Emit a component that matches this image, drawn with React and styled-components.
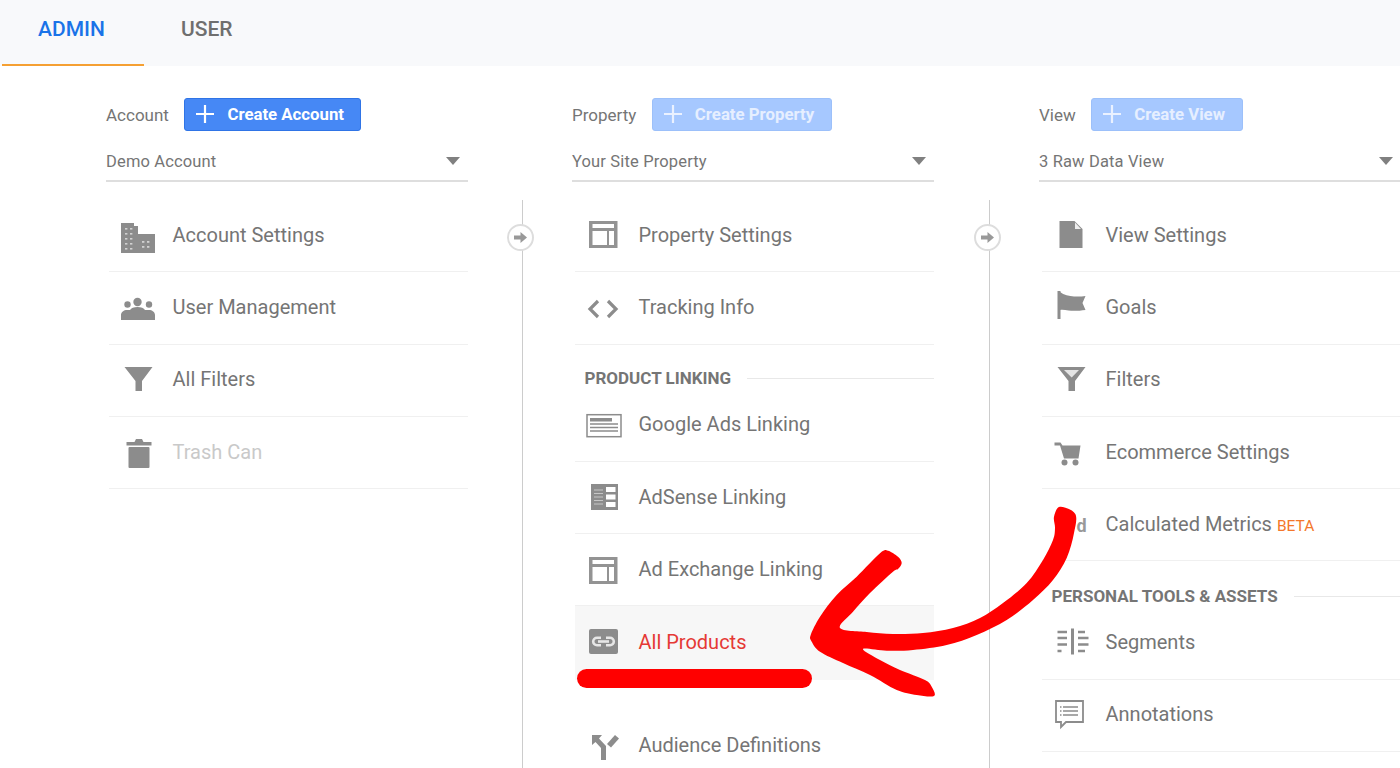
import styled, { createGlobalStyle } from "styled-components";

const GRAY = "#8c8c8c";

const GlobalStyle = createGlobalStyle`
  html, body {
    margin: 0;
    padding: 0;
    background: #fff;
    font-family: Roboto, "Liberation Sans", sans-serif;
    overflow: hidden;
  }
`;

const Page = styled.div`
  position: relative;
  width: 1400px;
  height: 768px;
  overflow: hidden;
  background: #fff;
`;

const TopBar = styled.div`
  height: 66px;
  background: #f8f9fb;
  padding-left: 2px;
  display: flex;
  box-sizing: border-box;
`;

const Tab = styled.div`
  box-sizing: border-box;
  height: 66px;
  width: ${(p) => p.$width}px;
  padding-left: ${(p) => p.$pad}px;
  display: flex;
  align-items: center;
  padding-bottom: 7px;
  font-size: 21px;
  font-weight: 500;
  color: ${(p) => (p.$active ? "#1a73e8" : "#6f6f6f")};
  border-bottom: 2px solid ${(p) => (p.$active ? "#f5a033" : "transparent")};
`;

const Columns = styled.div`
  display: flex;
  padding-left: 106px;
  height: 702px;
`;

const Column = styled.div`
  flex: 0 0 362px;
  width: 362px;
`;

const Head = styled.div`
  box-sizing: border-box;
  height: 134px;
  padding-top: 32px;
`;

const HeadRow = styled.div`
  display: flex;
  align-items: center;
  gap: 15.5px;
  height: 33px;
`;

const Label = styled.span`
  font-size: 17px;
  color: #757575;
`;

const CreateButton = styled.div`
  box-sizing: border-box;
  height: 33px;
  width: ${(p) => p.$width}px;
  display: flex;
  align-items: center;
  gap: 12px;
  padding: 0 0 1px 10px;
  border-radius: 3px;
  font-size: 16.8px;
  font-weight: 700;
  color: ${(p) => (p.$disabled ? "#e6efff" : "#fff")};
  background: ${(p) => (p.$disabled ? "#a6c8ff" : "#4688f5")};
  border: 1px solid ${(p) => (p.$disabled ? "#9cc0fa" : "#2f74e6")};
`;

const Select = styled.div`
  box-sizing: border-box;
  margin-top: 13px;
  height: 38px;
  padding: 0 8px 2px 0;
  display: flex;
  align-items: center;
  justify-content: space-between;
  font-size: 16.5px;
  letter-spacing: 0.15px;
  color: #757575;
  border-bottom: 2px solid #dedede;
`;

const Caret = styled.span`
  width: 0;
  height: 0;
  border-left: 7px solid transparent;
  border-right: 7px solid transparent;
  border-top: 8px solid #808080;
`;

const List = styled.div`
  padding-left: 2.5px;
`;

const Item = styled.div`
  box-sizing: border-box;
  height: ${(p) => p.$h || 72.3}px;
  margin-top: ${(p) => p.$top || 0}px;
  padding-left: 12px;
  display: flex;
  align-items: center;
  gap: 16px;
  font-size: 20px;
  color: ${(p) => (p.$muted ? "#c9c9c9" : p.$active ? "#e53935" : "#757575")};
  background: ${(p) => (p.$active ? "#f7f7f7" : "transparent")};
  border-bottom: 1px solid ${(p) => (p.$active || p.$plain ? "transparent" : "#f0f0f0")};
`;

const ItemText = styled.span`
  position: relative;
  top: -1px;
`;

const Beta = styled.span`
  margin-left: 5px;
  font-size: 15.5px;
  color: #f4772a;
`;

const IconSvg = styled.svg`
  flex: 0 0 36px;
  width: 36px;
  height: 36px;
  overflow: visible;
`;

const Section = styled.div`
  box-sizing: border-box;
  height: ${(p) => p.$h}px;
  padding: ${(p) => p.$pad}px 0 0 10px;
  display: flex;
  align-items: center;
  gap: 16px;
`;

const SectionTitle = styled.span`
  font-size: 17px;
  font-weight: 700;
  color: #757575;
  white-space: nowrap;
`;

const SectionRule = styled.span`
  flex: 1;
  height: 1px;
  background: #e8e8e8;
`;

const Connector = styled.div`
  flex: 0 0 ${(p) => p.$width}px;
  box-sizing: border-box;
  padding: 134px 0 0 ${(p) => p.$pad}px;
`;

const Line = styled.div`
  position: relative;
  width: 1.5px;
  height: 100%;
  background: #cccccc;
`;

const Knob = styled.div`
  position: absolute;
  top: 24px;
  left: -14.5px;
  box-sizing: border-box;
  width: 27px;
  height: 27px;
  border-radius: 50%;
  background: #fff;
  border: 2px solid #dddddd;
  display: flex;
  align-items: center;
  justify-content: center;
`;

const Overlay = styled.svg`
  position: absolute;
  left: 0;
  top: 0;
  width: 1400px;
  height: 768px;
  pointer-events: none;
`;

// outline of the hand drawn arrow, smoothed below
const arrowPoints = [
  [1060, 506.7], [1075.3, 514], [1074, 533], [1066.7, 558], [1053, 580], [1033, 600],
  [1006.7, 620], [976.7, 635], [946.7, 645], [913, 650], [886.7, 650.7], [863, 649],
  [880, 660], [900, 670], [925, 680], [931.7, 686.7], [934, 696], [916.7, 695],
  [896.7, 690], [870, 675], [843, 663], [820, 651.7], [811.7, 641.7], [810.7, 635],
  [820, 616.7], [836.7, 595], [856.7, 576.7], [880, 553.3], [888, 550.7], [898, 556.7],
  [901.7, 563], [898, 569], [893, 571.7], [870, 593], [853, 611.7], [840, 628],
  [866.7, 632], [893, 634], [923, 633], [953, 628], [980, 618], [1003, 603],
  [1026.7, 583], [1043, 560], [1053, 540], [1055, 528], [1054, 516.7],
];

const smoothPath = (pts) => {
  const n = pts.length;
  let d = `M${pts[0][0]} ${pts[0][1]}`;
  for (let i = 0; i < n; i++) {
    const p0 = pts[(i - 1 + n) % n];
    const p1 = pts[i];
    const p2 = pts[(i + 1) % n];
    const p3 = pts[(i + 2) % n];
    const c1x = (p1[0] + (p2[0] - p0[0]) / 6).toFixed(1);
    const c1y = (p1[1] + (p2[1] - p0[1]) / 6).toFixed(1);
    const c2x = (p2[0] - (p3[0] - p1[0]) / 6).toFixed(1);
    const c2y = (p2[1] - (p3[1] - p1[1]) / 6).toFixed(1);
    d += `C${c1x} ${c1y} ${c2x} ${c2y} ${p2[0]} ${p2[1]}`;
  }
  return d + "Z";
};

const Icon = ({ children }) => (
  <IconSvg viewBox="0 0 36 36" fill={GRAY}>
    {children}
  </IconSvg>
);

const Plus = ({ color }) => (
  <svg width="20" height="20" viewBox="0 0 20 20" style={{ flex: "0 0 20px" }}>
    <path d="M10 1v18M1 10h18" stroke={color} strokeWidth="2.2" fill="none" />
  </svg>
);

const BuildingIcon = () => (
  <Icon>
    <path d="M0 5h13v3h4v8h17v19H0z" />
    <g fill="#fff" opacity="0.6">
      {[4, 9].map((x) =>
        [10, 15, 20, 25, 30].map((y) => <rect key={x + "-" + y} x={x} y={y} width="2.4" height="1.6" />)
      )}
      {[21, 26].map((x) =>
        [23, 28].map((y) => <rect key={x + "-" + y} x={x} y={y} width="2.4" height="1.8" />)
      )}
    </g>
  </Icon>
);

const UsersIcon = () => (
  <Icon>
    <circle cx="16.5" cy="12" r="4.2" />
    <circle cx="6.5" cy="14.5" r="3.2" />
    <circle cx="28" cy="14.5" r="3.2" />
    <path d="M0 30v-5c0-3 3-5 6-5h3c1-2 4-3 7.500-3s6.500 1 7.500 3h4c3 0 6 2 6 5v5z" />
  </Icon>
);

const FunnelIcon = ({ hollow }) => (
  <Icon>
    <path d="M3.500 5h28L21 19v10h-6.500V19z" />
    {hollow && <path d="M10 8h15l-7.300 7.500z" fill="#e4e4e4" />}
  </Icon>
);

const TrashIcon = () => (
  <Icon>
    <path d="M5.500 7h8l1.500-3h6l1.500 3h8v3.500h-25z" />
    <rect x="7.500" y="12" width="21" height="21" rx="1" />
  </Icon>
);

const LayoutIcon = ({ y = 3 }) => (
  <Icon>
    <rect x="2" y={y} width="28.500" height="27" fill="#939393" />
    <g fill="#fff">
      <rect x="5.500" y={y + 3} width="21.500" height="4" />
      <rect x="5.500" y={y + 10} width="14.500" height="14" />
      <rect x="22" y={y + 10} width="5" height="14" />
    </g>
  </Icon>
);

const CodeIcon = () => (
  <Icon>
    <path d="M11 11l-8 8 8 8M21 11l8 8-8 8" fill="none" stroke={GRAY} strokeWidth="3.200" />
  </Icon>
);

const AdsIcon = () => (
  <Icon>
    <rect x="0" y="7.700" width="34" height="22" fill="#fff" stroke={GRAY} strokeWidth="1.500" />
    <rect x="3" y="11" width="22" height="3.500" />
    <path d="M3 17h28M3 20.500h28M3 24h28" stroke={GRAY} strokeWidth="1.300" fill="none" />
  </Icon>
);

const AdSenseIcon = () => (
  <Icon>
    <rect x="4" y="4" width="27" height="26" />
    <g fill="#fff">
      <rect x="19" y="7" width="9.500" height="5" />
      <rect x="19" y="14.500" width="9.500" height="5" />
      <rect x="19" y="22" width="9.500" height="5" />
    </g>
    <path d="M7 10h9M7 13.500h9M7 17h9M7 20.500h9M7 24h9" stroke="#c6c6c6" strokeWidth="1" />
  </Icon>
);

const LinkIcon = () => (
  <Icon>
    <rect x="2" y="4" width="29" height="25" rx="2" />
    <g fill="none" stroke="#e6e6e6" strokeWidth="2.600">
      <path d="M14 12.700H10a3.800 3.800 0 0 0 0 7.600h4" />
      <path d="M19 12.700h4a3.800 3.800 0 0 1 0 7.600h-4" />
      <path d="M11 16.500h11" />
    </g>
  </Icon>
);

const AudienceIcon = () => (
  <Icon>
    <path d="M5 7h10l-3 3.500 7 7.500v14h-5V20l-5.500-6L5 17z" />
    <path d="M20 16l8-9 4 3.500-8 9z" />
  </Icon>
);

const FileIcon = () => (
  <Icon>
    <path d="M5.500 3h15l8 8v19h-23z" />
    <path d="M21 4.500l6 6.500h-6z" fill="#eee" />
  </Icon>
);

const FlagIcon = () => (
  <Icon>
    <rect x="3.500" y="1" width="3" height="28" />
    <path d="M6 2c4 3 9 4 14 4.500 4 .3 8 0 11.500-.5l-3 7 3 7c-7 1-13 1-17 .5-3-.4-6-1-8.500-.5z" />
  </Icon>
);

const CartIcon = () => (
  <Icon>
    <path d="M.5 7.500h6l2 3h18l-2 13H10L6 10.500H.5z" />
    <circle cx="10.500" cy="27.500" r="3" />
    <circle cx="21.500" cy="27.500" r="3" />
  </Icon>
);

const MetricsIcon = () => (
  <Icon>
    <text x="22.500" y="25" fontFamily="Roboto, sans-serif" fontWeight="700" fontSize="18" fill="#999">d</text>
  </Icon>
);

const SegmentsIcon = () => (
  <Icon>
    <rect x="17" y="3.500" width="3" height="26" />
    <g stroke={GRAY} strokeWidth="2.600" fill="none">
      <path d="M3.500 7h9.500M3.500 13h9.500M3.500 19.500h9.500M3.500 26h4" />
      <path d="M24 7h7M24 13h10.500M24 19.500h10.500M24 26h7" />
    </g>
  </Icon>
);

const NoteIcon = () => (
  <Icon>
    <path d="M2 4h27v21H12l-5 5v-5H2z" fill="#fff" stroke={GRAY} strokeWidth="1.800" />
    <path d="M9 10h15M9 14h15M9 18h15" stroke={GRAY} strokeWidth="1.600" fill="none" />
    <path d="M6 10h1.500M6 14h1.500M6 18h1.500" stroke={GRAY} strokeWidth="1.600" fill="none" />
  </Icon>
);

const KnobArrow = () => (
  <svg width="13" height="11" viewBox="0 0 13 11">
    <path d="M0 3.500h6.500V0L13 5.500 6.500 11V7.500H0z" fill="#999" />
  </svg>
);

const Connect = ({ width, pad }) => (
  <Connector $width={width} $pad={pad}>
    <Line>
      <Knob>
        <KnobArrow />
      </Knob>
    </Line>
  </Connector>
);

const Head1 = ({ label, button, width, disabled, value }) => (
  <Head>
    <HeadRow>
      <Label>{label}</Label>
      <CreateButton $width={width} $disabled={disabled}>
        <Plus color={disabled ? "#eaf1ff" : "#fff"} />
        {button}
      </CreateButton>
    </HeadRow>
    <Select>
      {value}
      <Caret />
    </Select>
  </Head>
);

const Row = ({ icon, text, ...rest }) => (
  <Item {...rest}>
    {icon}
    <ItemText>{text}</ItemText>
  </Item>
);

const App = () => (
  <Page>
    <GlobalStyle />
    <TopBar>
      <Tab $active $width={142} $pad={36}>ADMIN</Tab>
      <Tab $width={120} $pad={37}>USER</Tab>
    </TopBar>
    <Columns>
      <Column>
        <Head1 label="Account" button="Create Account" width={177} value="Demo Account" />
        <List>
          <Row icon={<BuildingIcon />} text="Account Settings" />
          <Row icon={<UsersIcon />} text="User Management" />
          <Row icon={<FunnelIcon />} text="All Filters" />
          <Row icon={<TrashIcon />} text="Trash Can" $muted />
        </List>
      </Column>
      <Connect width={104} pad={53.5} />
      <Column>
        <Head1 label="Property" button="Create Property" width={180} disabled value="Your Site Property" />
        <List>
          <Row icon={<LayoutIcon />} text="Property Settings" />
          <Row icon={<CodeIcon />} text="Tracking Info" />
          <Section $h={45} $pad={22}>
            <SectionTitle>PRODUCT LINKING</SectionTitle>
            <SectionRule />
          </Section>
          <Row icon={<AdsIcon />} text="Google Ads Linking" />
          <Row icon={<AdSenseIcon />} text="AdSense Linking" />
          <Row icon={<LayoutIcon y={5} />} text="Ad Exchange Linking" />
          <Row icon={<LinkIcon />} text="All Products" $active $h={74} />
          <Row icon={<AudienceIcon />} text="Audience Definitions" $top={30} $plain />
        </List>
      </Column>
      <Connect width={105} pad={54.5} />
      <Column>
        <Head1 label="View" button="Create View" width={152} disabled value="3 Raw Data View" />
        <List>
          <Row icon={<FileIcon />} text="View Settings" />
          <Row icon={<FlagIcon />} text="Goals" />
          <Row icon={<FunnelIcon hollow />} text="Filters" />
          <Row icon={<CartIcon />} text="Ecommerce Settings" />
          <Row
            icon={<MetricsIcon />}
            text={
              <>
                Calculated Metrics<Beta>BETA</Beta>
              </>
            }
          />
          <Section $h={46} $pad={24}>
            <SectionTitle>PERSONAL TOOLS &amp; ASSETS</SectionTitle>
            <SectionRule />
          </Section>
          <Row icon={<SegmentsIcon />} text="Segments" />
          <Row icon={<NoteIcon />} text="Annotations" />
        </List>
      </Column>
    </Columns>
    <Overlay viewBox="0 0 1400 768">
      <rect x="577" y="669" width="235" height="19" rx="9.500" fill="#ff0000" />
      <path fill="#ff0000" d={smoothPath(arrowPoints)} />
    </Overlay>
  </Page>
);

export default App;
